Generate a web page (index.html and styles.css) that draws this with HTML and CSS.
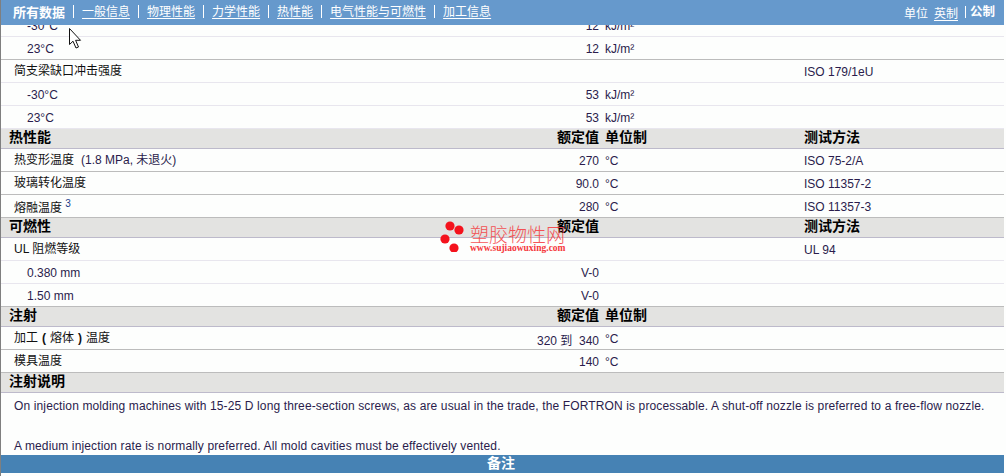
FILE: index.html
```html
<!DOCTYPE html>
<html lang="zh">
<head>
<meta charset="utf-8">
<title>塑胶物性</title>
<link rel="stylesheet" href="styles.css">
</head>
<body>
<div class="page">
  <nav class="nav">
    <div class="nav-links">
      <strong class="nav-current">所有数据</strong>
      <a href="#">一般信息</a>
      <a href="#">物理性能</a>
      <a href="#">力学性能</a>
      <a href="#">热性能</a>
      <a href="#">电气性能与可燃性</a>
      <a href="#">加工信息</a>
    </div>
    <div class="nav-units">
      <span>单位</span>
      <a href="#">英制</a>
      <strong class="unit-current">公制</strong>
    </div>
  </nav>
  <main class="sheet">
    <div class="row sub"><span class="label">-30°C</span><span class="val">12</span><span class="unit">kJ/m²</span></div>
    <div class="row sub end"><span class="label">23°C</span><span class="val">12</span><span class="unit">kJ/m²</span></div>
    <div class="row parent"><span class="label">简支梁缺口冲击强度</span><span class="val"></span><span class="unit"></span><span class="test">ISO 179/1eU</span></div>
    <div class="row sub"><span class="label">-30°C</span><span class="val">53</span><span class="unit">kJ/m²</span></div>
    <div class="row sub"><span class="label">23°C</span><span class="val">53</span><span class="unit">kJ/m²</span></div>

    <div class="row head"><span class="label">热性能</span><span class="val">额定值</span><span class="unit">单位制</span><span class="test">测试方法</span></div>
    <div class="row end"><span class="label">热变形温度<span class="cond">(1.8 MPa, 未退火)</span></span><span class="val">270</span><span class="unit">°C</span><span class="test">ISO 75-2/A</span></div>
    <div class="row end"><span class="label">玻璃转化温度</span><span class="val">90.0</span><span class="unit">°C</span><span class="test">ISO 11357-2</span></div>
    <div class="row end"><span class="label low">熔融温度 <sup class="note-ref">3</sup></span><span class="val">280</span><span class="unit">°C</span><span class="test">ISO 11357-3</span></div>

    <div class="row head"><span class="label">可燃性</span><span class="val">额定值</span><span class="unit"></span><span class="test">测试方法</span></div>
    <div class="row parent"><span class="label">UL 阻燃等级</span><span class="val"></span><span class="unit"></span><span class="test">UL 94</span></div>
    <div class="row sub"><span class="label">0.380 mm</span><span class="val">V-0</span></div>
    <div class="row sub end"><span class="label">1.50 mm</span><span class="val">V-0</span></div>

    <div class="row head"><span class="label">注射</span><span class="val">额定值</span><span class="unit">单位制</span></div>
    <div class="row end"><span class="label">加工<span class="paren">(</span>熔体<span class="paren">)</span>温度</span><span class="val">320 到&nbsp; 340</span><span class="unit">°C</span></div>
    <div class="row end"><span class="label">模具温度</span><span class="val">140</span><span class="unit">°C</span></div>

    <div class="row head"><span class="label">注射说明</span></div>
    <p class="notes">On injection molding machines with 15-25 D long three-section screws, as are usual in the trade, the FORTRON is processable. A shut-off nozzle is preferred to a free-flow nozzle.<br><br>A medium injection rate is normally preferred. All mold cavities must be effectively vented.</p>
    <div class="band">备注</div>
  </main>

  <div class="watermark">
    <svg class="wm-dots" width="24" height="32" viewBox="0 0 24 32"><circle cx="10" cy="6" r="4.6"/><circle cx="19" cy="10" r="4.6"/><circle cx="5" cy="19" r="4.6"/><circle cx="14" cy="28" r="4.6"/></svg>
    <div class="wm-text">
      <span class="wm-name">塑胶物性网</span>
      <span class="wm-url">www.sujiaowuxing.com</span>
    </div>
  </div>

  <svg class="cursor" width="14" height="23" viewBox="0 0 14 23"><path d="M1.5 1.5V17.5L5 14.2L8 21L10.5 20L7.6 13.3H12.5Z" fill="#fff" stroke="#111" stroke-width="1"/></svg>
</div>
</body>
</html>
```
FILE: styles.css
```css
* { box-sizing: border-box; }
html, body { margin: 0; padding: 0; background: #fdfefd; }
body {
  height: 476px;
  overflow: hidden;
  font: 12px "Liberation Sans", "Noto Sans CJK SC", sans-serif;
  color: #2a1c4c;
}
.page {
  position: relative;
  width: 1004px;
  height: 476px;
  overflow: hidden;
  border-left: 1px solid #7f7f7f;
}
.nav {
  position: relative;
  z-index: 1;
  height: 25px;
  display: flex;
  justify-content: space-between;
  align-items: center;
  padding: 0 9px 1px 12px;
  background: #6699cc;
  color: #fff;
}
.nav a { color: #fff; text-decoration: underline; text-underline-offset: 2px; }
.nav-links, .nav-units { display: flex; align-items: center; }
.nav-links > * { line-height: 13px; }
.nav-links > a { margin-left: 8px; }
.nav-links > a::before {
  content: "";
  display: inline-block;
  width: 1px;
  height: 13px;
  margin-right: 8px;
  background: #fff;
  vertical-align: -2px;
}
.nav-current { font-size: 13px; font-weight: 700; }
.nav-units a { margin-left: 6px; }
.unit-current {
  margin-left: 7px;
  padding-left: 4px;
  border-left: 1px solid #fff;
  font-size: 12.5px;
  line-height: 12px;
}
.sheet { margin-top: -11px; }
.row {
  display: grid;
  grid-template-columns: 598px 205px 1fr;
  height: 23px;
  align-items: center;
  border-bottom: 1px solid #e8e6ee;
}
.row.end { border-bottom-color: #bcbcbc; }
.row .label { grid-column: 1; grid-row: 1; padding-left: 13px; color: #111; line-height: 16px; margin-top: -1px; justify-self: start; }
.row .label.low { margin-top: 3px; }
.row .val { grid-column: 1; grid-row: 1; justify-self: end; padding-top: 2px; }
.row .unit { grid-column: 2; grid-row: 1; padding-left: 6px; padding-top: 2px; }
.row .test { grid-column: 3; grid-row: 1; padding-top: 2px; }
.row.sub .label { padding-left: 26px; color: #2a1c4c; margin-top: 2px; }
.row.head {
  height: 20px;
  background: #e3e3e1;
  border-bottom-color: #bdbacb;
  color: #000;
  font-size: 14px;
  font-weight: 700;
  line-height: 16px;
}
.row.head > * { padding-top: 0; margin-top: -3px; }
.row.head .label { padding-left: 8px; color: #000; margin-top: -3px; }
.cond { margin-left: 7px; color: #2a1c4c; }
.paren { display: inline-block; width: 12px; line-height: 1; text-align: center; font-weight: 700; }
.note-ref { font-size: 10px; line-height: 0; color: #1a3a8a; }
.notes {
  margin: 0;
  height: 62px;
  padding: 3px 13px 0;
  line-height: 20px;
  letter-spacing: .13px;
}
.band {
  height: 18px;
  padding-right: 3px;
  line-height: 17px;
  background: #4682b4;
  color: #fff;
  font-size: 14px;
  font-weight: 700;
  text-align: center;
}
.watermark {
  position: absolute;
  left: 439px;
  top: 220px;
  display: flex;
  gap: 6px;
  color: #f5383c;
}
.wm-dots { fill: #f4121c; }
.wm-text { display: flex; flex-direction: column; align-items: flex-start; margin-top: 4px; }
.wm-name { font-size: 19px; line-height: 20px; font-family: "Noto Sans CJK SC", sans-serif; font-weight: 300; opacity: .85; }
.wm-url { margin-top: -2px; font: 700 9.5px/12px "Liberation Serif", serif; }
.cursor { position: absolute; left: 67px; top: 27px; z-index: 2; }
```
